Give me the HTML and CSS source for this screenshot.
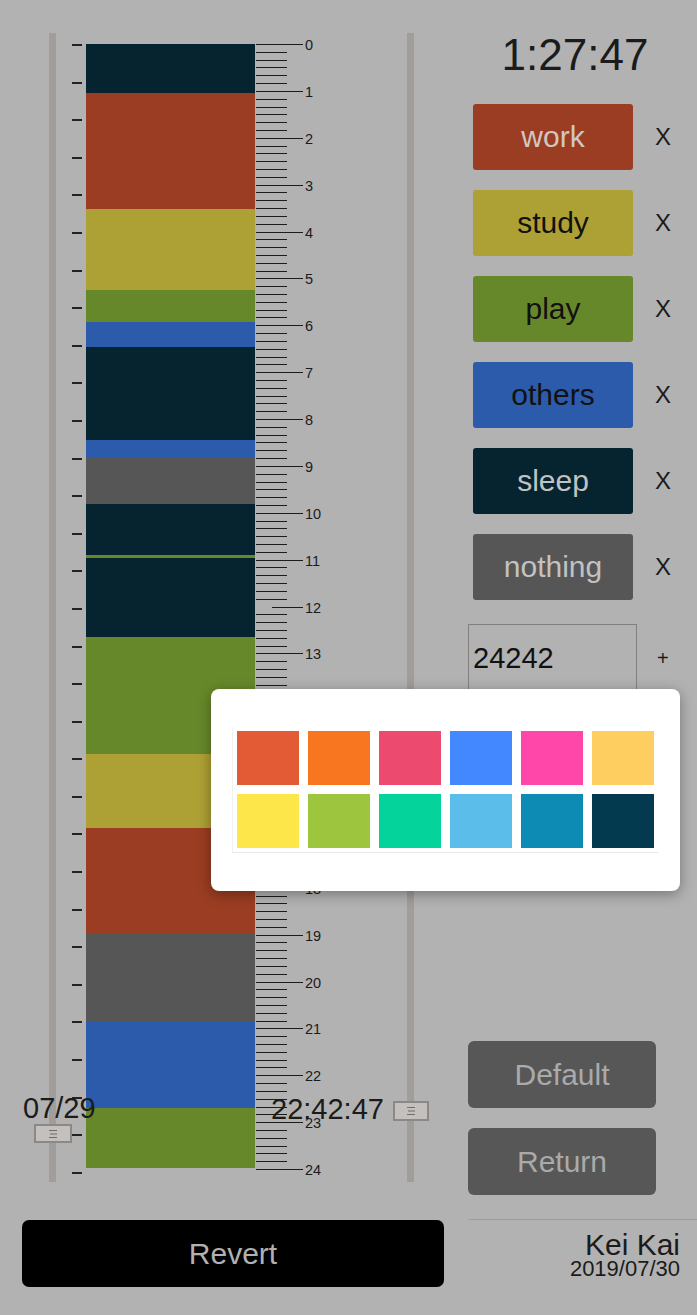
FILE: index.html
```html
<!DOCTYPE html>
<html lang="en">
<head>
  <meta charset="UTF-8" />
  <title>Day Log</title>
  <link rel="stylesheet" href="styles.css">
</head>
<body>
  <div class="page">
    <div class="left">
      <div class="timeline">
        <div class="rail"></div>
        <div class="scale">
          <div id="quarters" class="quarters"></div>
          <div id="bar" class="bar"></div>
          <div id="ruler" class="ruler"></div>
        </div>
        <div class="rail"></div>

        <span class="slider-label start-label">07/29</span>
        <div class="handle start-handle">
          <svg width="12" height="12" viewBox="0 0 12 12"><path d="M2 2.5h8M3 6h7M2 9.5h8" stroke="#6f6c69" stroke-width="1.2"/></svg>
        </div>
        <span class="slider-label end-label">22:42:47</span>
        <div class="handle end-handle">
          <svg width="12" height="12" viewBox="0 0 12 12"><path d="M2 2.5h8M3 6h7M2 9.5h8" stroke="#6f6c69" stroke-width="1.2"/></svg>
        </div>
      </div>
      <button class="revert-btn">Revert</button>
    </div>

    <div class="right">
      <div class="clock">1:27:47</div>
      <ul class="categories">
        <li class="category"><button class="cat-btn work">work</button><span class="remove">X</span></li>
        <li class="category"><button class="cat-btn study">study</button><span class="remove">X</span></li>
        <li class="category"><button class="cat-btn play">play</button><span class="remove">X</span></li>
        <li class="category"><button class="cat-btn others">others</button><span class="remove">X</span></li>
        <li class="category"><button class="cat-btn sleep">sleep</button><span class="remove">X</span></li>
        <li class="category"><button class="cat-btn nothing">nothing</button><span class="remove">X</span></li>
      </ul>
      <div class="add-row">
        <input class="new-cat" type="text" value="24242" />
        <span class="add">+</span>
      </div>
      <div class="actions">
        <button class="gray-btn">Default</button>
        <button class="gray-btn">Return</button>
      </div>
      <div class="signature">
        <div class="name">Kei Kai</div>
        <div class="date">2019/07/30</div>
      </div>
    </div>

    <div class="color-picker">
      <div id="swatches" class="swatches"></div>
    </div>
  </div>

  <script>
    // pixels per hour on the scale
    const HOUR = 46.9167;

    // today's log: [category, minutes]
    const log = [
      ["sleep", 63], ["work", 148], ["study", 104], ["play", 41], ["others", 32],
      ["sleep", 119], ["others", 23], ["nothing", 58], ["sleep", 66], ["play", 4],
      ["sleep", 100], ["play", 150], ["study", 95], ["work", 134], ["nothing", 113],
      ["others", 111], ["play", 77]
    ];

    const bar = document.getElementById("bar");
    log.forEach(([cat, mins]) => {
      const seg = document.createElement("div");
      seg.className = "segment " + cat;
      seg.style.height = (mins / 60) * HOUR + "px";
      bar.appendChild(seg);
    });

    // ruler with a tick every 10 minutes
    const ruler = document.getElementById("ruler");
    for (let i = 0; i <= 144; i++) {
      const tick = document.createElement("div");
      tick.className = "tick";
      const line = document.createElement("span");
      line.className = "line";
      tick.appendChild(line);
      if (i % 6 === 0) {
        tick.classList.add("major");
        if (i === 72) tick.classList.add("noon");
        const num = document.createElement("span");
        num.className = "num";
        num.textContent = i / 6;
        tick.appendChild(num);
      }
      ruler.appendChild(tick);
    }

    // slider ticks on the left
    const quarters = document.getElementById("quarters");
    for (let i = 0; i < 31; i++) {
      const q = document.createElement("div");
      q.className = "q";
      quarters.appendChild(q);
    }

    // colour picker
    const swatchColors = [
      "#e25b34", "#f8761f", "#ed4a6f", "#4388fe", "#ff46a9", "#fecf60",
      "#fde64a", "#9dc53e", "#04d49c", "#5bbeea", "#0d8bb5", "#043a4f"
    ];
    const swatches = document.getElementById("swatches");
    swatchColors.forEach((c) => {
      const s = document.createElement("div");
      s.className = "swatch";
      s.style.background = c;
      swatches.appendChild(s);
    });
  </script>
</body>
</html>
```

FILE: styles.css
```css
body {
  margin: 0;
  font-family: "Liberation Sans", Arial, sans-serif;
  background: #b2b2b2;
  color: #1b1b1b;
}

.page {
  position: relative;
  display: flex;
  width: 697px;
  height: 1315px;
  overflow: hidden;
}

/* left side */

.left {
  width: 460px;
  padding-left: 22px;
  box-sizing: border-box;
}

.timeline {
  position: relative;
  display: flex;
  align-items: flex-start;
  height: 1200px;
  padding-top: 33px;
  box-sizing: border-box;
}

.rail {
  width: 7px;
  height: 1149px;
  background: #a09d9a;
}

.timeline > .rail:first-child {
  margin-left: 27px;
}

.scale {
  display: flex;
  align-items: flex-start;
  width: 351px;
  padding: 11px 0 0 16px;
  box-sizing: border-box;
}

.quarters {
  display: flex;
  flex-direction: column;
  justify-content: space-between;
  width: 10px;
  height: 1130px;
  margin-right: 4px;
}

.q {
  height: 2px;
  background: #222;
}

.bar {
  width: 169px;
  display: flex;
  flex-direction: column;
}

.ruler {
  margin-left: 1px;
  width: 70px;
}

.tick {
  display: flex;
  align-items: flex-start;
  height: 7.8194px;
}

.tick .line {
  width: 31px;
  height: 1px;
  background: #1c1c1c;
}

.tick.major .line {
  width: 47px;
}

.tick.noon .line {
  width: 31px;
  margin-left: 16px;
}

.tick .num {
  font-size: 14.5px;
  line-height: 14px;
  margin-top: -6px;
  margin-left: 2px;
  color: #1b1b1b;
}

.slider-label {
  position: absolute;
  font-size: 29px;
  line-height: 34px;
  color: #1b1b1b;
}

.start-label {
  left: 1px;
  top: 1091px;
}

.end-label {
  left: 249px;
  top: 1092px;
}

.handle {
  position: absolute;
  display: flex;
  align-items: center;
  justify-content: center;
  background: #c3c0bd;
  border: 2px solid #8b8885;
  box-sizing: border-box;
}

.start-handle {
  left: 12px;
  top: 1124px;
  width: 38px;
  height: 19px;
}

.end-handle {
  left: 371px;
  top: 1101px;
  width: 36px;
  height: 20px;
}

.revert-btn {
  display: block;
  width: 422px;
  height: 67px;
  margin-top: 20px;
  background: #000;
  color: #b1b1b1;
  border: none;
  border-radius: 7px;
  font-family: inherit;
  font-size: 30px;
}

/* category colours */

.sleep { background: #05242f; }
.work { background: #9b3d22; }
.study { background: #ada035; }
.play { background: #67882a; }
.others { background: #2c5bac; }
.nothing { background: #565656; }

/* right side */

.right {
  width: 237px;
  padding-left: 8px;
  box-sizing: border-box;
}

.clock {
  margin-top: 30px;
  height: 50px;
  padding-right: 15px;
  font-size: 44px;
  line-height: 50px;
  text-align: center;
}

.categories {
  list-style: none;
  margin: 24px 0 0;
  padding: 0 0 0 5px;
  display: flex;
  flex-direction: column;
  gap: 20px;
}

.category {
  display: flex;
  align-items: center;
  height: 66px;
}

.cat-btn {
  width: 160px;
  height: 66px;
  border: none;
  border-radius: 3px;
  font-family: inherit;
  font-size: 30px;
  color: #111;
}

.cat-btn.work,
.cat-btn.sleep,
.cat-btn.nothing {
  color: #c2c2c2;
}

.cat-btn.work {
  color: #d2c6c2;
}

.remove {
  margin-left: 22px;
  font-size: 24px;
}

.add-row {
  display: flex;
  align-items: center;
  margin-top: 24px;
}

.new-cat {
  width: 169px;
  height: 68px;
  padding: 0 4px;
  box-sizing: border-box;
  background: transparent;
  border: 1px solid #808080;
  font-family: inherit;
  font-size: 29px;
  color: #111;
}

.add {
  margin-left: 20px;
  font-size: 20px;
}

.actions {
  display: flex;
  flex-direction: column;
  gap: 20px;
  margin-top: 349px;
}

.gray-btn {
  width: 188px;
  height: 67px;
  background: #575757;
  color: #aaaaaa;
  border: none;
  border-radius: 6px;
  font-family: inherit;
  font-size: 30px;
}

.signature {
  margin-top: 24px;
  padding: 9px 17px 0 0;
  border-top: 1px solid #9d9d9d;
  text-align: right;
}

.signature .name {
  font-size: 30px;
  line-height: 31px;
}

.signature .date {
  font-size: 22px;
  line-height: 18px;
}

/* colour picker popup */

.color-picker {
  position: absolute;
  left: 211px;
  top: 689px;
  width: 469px;
  height: 202px;
  padding: 38px 0 0 21px;
  box-sizing: border-box;
  background: #fff;
  border-radius: 8px;
  box-shadow: 0 3px 14px rgba(0, 0, 0, 0.35);
}

.swatches {
  display: grid;
  grid-template-columns: repeat(6, 62px);
  gap: 9px;
  width: 417px;
  padding: 4px;
  border-left: 1px solid #f1f1f1;
  border-bottom: 1px solid #e9e9e9;
}

.swatch {
  height: 54px;
}
```
